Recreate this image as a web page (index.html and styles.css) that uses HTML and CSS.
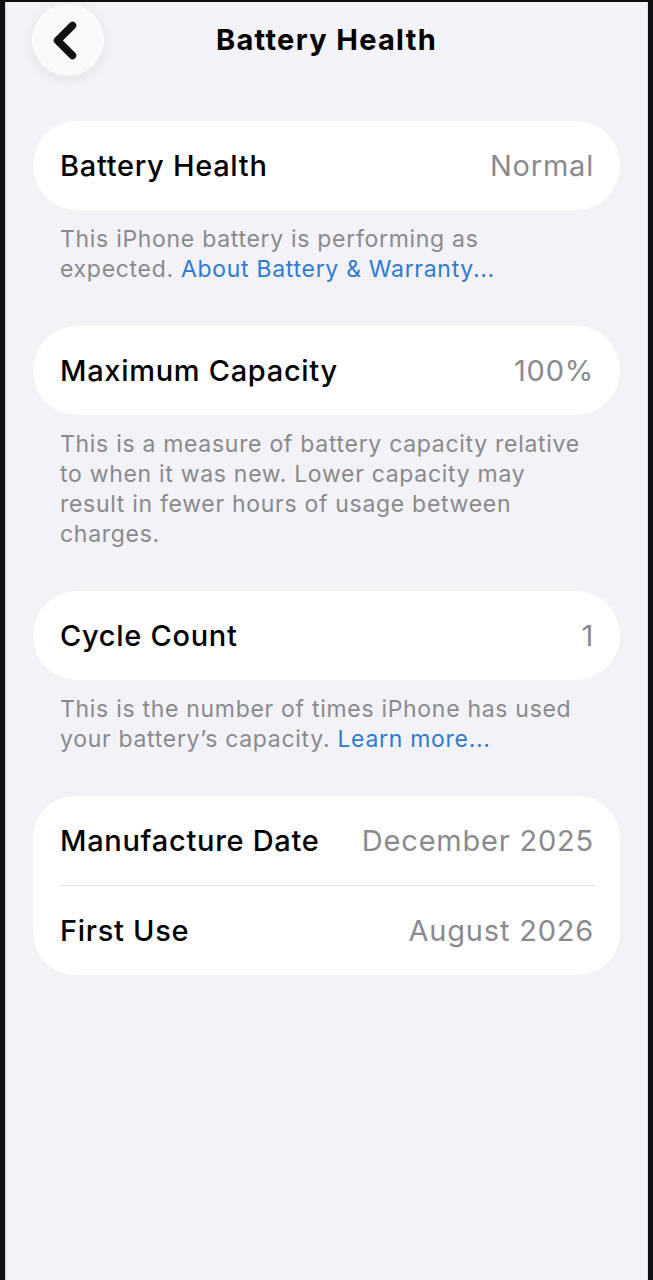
FILE: index.html
```html
<!DOCTYPE html>
<html lang="en">
<head>
<meta charset="utf-8">
<title>Battery Health</title>
<link rel="stylesheet" href="styles.css">
</head>
<body>
<div class="screen">
  <header class="nav">
    <button class="back" aria-label="Back">
      <svg width="30" height="40" viewBox="0 0 30 40"><path d="M21.5 5.5 L6.5 20.5 L21.5 35.5" fill="none" stroke="#111" stroke-width="7.5" stroke-linecap="round" stroke-linejoin="round"/></svg>
    </button>
    <h1 class="title">Battery Health</h1>
    <span class="spacer"></span>
  </header>

  <main class="content">
    <section class="group">
      <div class="card">
        <div class="row"><span class="label">Battery Health</span><span class="value">Normal</span></div>
      </div>
      <p class="note">This iPhone battery is performing as expected. <a class="link">About Battery &amp; Warranty...</a></p>
    </section>

    <section class="group">
      <div class="card">
        <div class="row"><span class="label">Maximum Capacity</span><span class="value">100%</span></div>
      </div>
      <p class="note">This is a measure of battery capacity relative to when it was new. Lower capacity may result in fewer hours of usage between charges.</p>
    </section>

    <section class="group">
      <div class="card">
        <div class="row"><span class="label">Cycle Count</span><span class="value">1</span></div>
      </div>
      <p class="note">This is the number of times iPhone has used your battery’s capacity. <a class="link">Learn more...</a></p>
    </section>

    <section class="group">
      <div class="card card-list">
        <div class="row"><span class="label">Manufacture Date</span><span class="value">December 2025</span></div>
        <div class="divider"></div>
        <div class="row"><span class="label">First Use</span><span class="value">August 2026</span></div>
      </div>
    </section>
  </main>
</div>
</body>
</html>
```

FILE: styles.css
```css
html, body {
  margin: 0;
  padding: 0;
}
body {
  background: #111113;
  font-family: Inter, "Noto Sans", "Liberation Sans", sans-serif;
}
.screen {
  margin: 2px 5px 0 5px;
  min-height: 1278px;
  background: #f2f2f7;
  border-left: 1px solid #d6d6da;
  border-right: 1px solid #e2e2e6;
  box-sizing: border-box;
}
.nav {
  display: grid;
  grid-template-columns: 72px 1fr 72px;
  align-items: center;
  padding: 1px 26px 0 26px;
  height: 73px;
}
.back {
  width: 72px;
  height: 72px;
  border-radius: 50%;
  border: none;
  background: #fafafc;
  box-shadow: 0 3px 14px rgba(0, 0, 0, 0.07);
  display: flex;
  align-items: center;
  justify-content: center;
  padding: 0 4px 0 0;
  margin: 0;
}
.back svg {
  display: block;
}
.title {
  margin: 0;
  text-align: center;
  font-size: 29px;
  font-weight: 700;
  color: #000;
  letter-spacing: 1.3px;
}
.content {
  display: flex;
  flex-direction: column;
  gap: 42px;
  padding: 45px 27px 0 27px;
}
.group {
  display: flex;
  flex-direction: column;
  gap: 14px;
}
.card {
  background: #fff;
  border-radius: 44px;
  padding: 0 26px 0 27px;
}
.card-list {
  border-radius: 42px;
}
.row {
  height: 89px;
  display: flex;
  align-items: center;
  justify-content: space-between;
}
.label {
  font-size: 29px;
  font-weight: 500;
  color: #000;
  letter-spacing: 0.7px;
}
.value {
  font-size: 29px;
  font-weight: 400;
  color: #8a8a8e;
  letter-spacing: 0.8px;
}
.divider {
  height: 1px;
  background: #e2e2e6;
  margin-right: -1px;
}
.note {
  margin: 0;
  padding: 0 32px 0 27px;
  font-size: 23px;
  line-height: 30px;
  color: #8a8a8e;
  letter-spacing: 0.7px;
}
.link {
  color: #2f7bd2;
}
```
